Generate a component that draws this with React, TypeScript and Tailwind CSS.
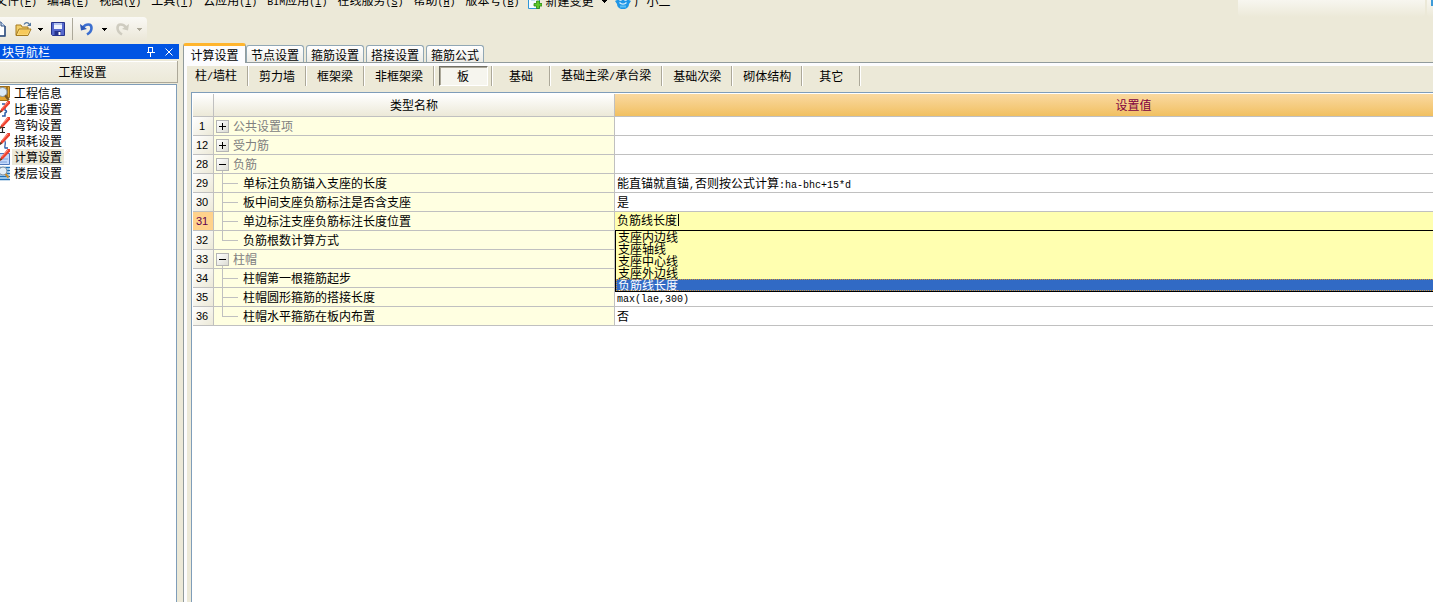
import React from 'react';

type Row = {
  no: number;
  name: string;
  value?: string;
  group?: 'open' | 'closed';
  last?: boolean;
  editing?: boolean;
};

const menus = [
  ['文件', 'F'],
  ['编辑', 'E'],
  ['视图', 'V'],
  ['工具', 'T'],
  ['云应用', 'I'],
  ['BIM应用', 'I'],
  ['在线服务', 'S'],
  ['帮助', 'H'],
  ['版本号', 'B'],
];

const tabs = ['计算设置', '节点设置', '箍筋设置', '搭接设置', '箍筋公式'];

const categories = [
  '柱/墙柱',
  '剪力墙',
  '框架梁',
  '非框架梁',
  '板',
  '基础',
  '基础主梁/承台梁',
  '基础次梁',
  '砌体结构',
  '其它',
];

const rows: Row[] = [
  { no: 1, name: '公共设置项', group: 'closed' },
  { no: 12, name: '受力筋', group: 'closed' },
  { no: 28, name: '负筋', group: 'open' },
  { no: 29, name: '单标注负筋锚入支座的长度', value: '能直锚就直锚,否则按公式计算:ha-bhc+15*d' },
  { no: 30, name: '板中间支座负筋标注是否含支座', value: '是' },
  { no: 31, name: '单边标注支座负筋标注长度位置', value: '负筋线长度', editing: true },
  { no: 32, name: '负筋根数计算方式', last: true },
  { no: 33, name: '柱帽', group: 'open' },
  { no: 34, name: '柱帽第一根箍筋起步' },
  { no: 35, name: '柱帽圆形箍筋的搭接长度', value: 'max(lae,300)' },
  { no: 36, name: '柱帽水平箍筋在板内布置', value: '否', last: true },
];

const options = ['支座内边线', '支座轴线', '支座中心线', '支座外边线', '负筋线长度'];

// Latin characters take half the width of a Chinese one
const Mixed = ({ text }: { text: string }) => (
  <>
    {text.split(/([\x20-\x7e]+)/).map((part, i) =>
      i % 2 ? (
        <span key={i} className="font-['Liberation_Mono',monospace] text-[10px]">
          {part}
        </span>
      ) : (
        part
      ),
    )}
  </>
);

const Caret = ({ className = '' }: { className?: string }) => (
  <svg viewBox="0 0 5 3" className={`h-[3px] w-[5px] shrink-0 ${className}`} fill="currentColor" shapeRendering="crispEdges">
    <path d="M0 0h5v1H4v1H3v1H2V2H1V1H0z" />
  </svg>
);

const NewDocIcon = () => (
  <svg viewBox="0 0 16 16" className="h-4 w-4">
    <path d="M3 1h7l4 4v10H3z" fill="#fff" stroke="#4a6ea8" />
    <path d="M10 1v4h4" fill="#c9daf3" stroke="#34527f" />
    <path d="M14 5v10H4" fill="none" stroke="#34527f" strokeWidth="1.5" />
  </svg>
);

const OpenIcon = () => (
  <svg viewBox="0 0 17 16" className="h-4 w-[17px]">
    <path d="M1 14V4h5l1 2h6v3" fill="#f2cf6b" stroke="#a67a1e" />
    <path d="M4 8h12l-3 6.5H1z" fill="#fbdf86" stroke="#a67a1e" />
    <path d="M5 9h9.5L12 13.5H3z" fill="#f7c95a" />
    <path d="M9 3.5C10.5 1 13 1 14.5 3.5" fill="none" stroke="#53779f" strokeWidth="1.3" />
    <path d="M16 1.5V5h-4z" fill="#53779f" />
  </svg>
);

const SaveIcon = () => (
  <svg viewBox="0 0 14 14" className="h-3.5 w-3.5">
    <path d="M.5.5h13v13h-12l-1-1z" fill="#5568cc" stroke="#26338c" />
    <path d="M3 1h8v6H3z" fill="#eef2fd" />
    <path d="M3 1h8v2H3z" fill="#b3c4f0" />
    <path d="M3.5 9H10v4H3.5z" fill="#26338c" />
    <path d="M7.5 10h2v3h-2z" fill="#fff" />
  </svg>
);

const TurnIcon = ({ redo = false }: { redo?: boolean }) => (
  <svg viewBox="0 0 14 14" className="h-3.5 w-3.5">
    <g transform={redo ? 'translate(14 0) scale(-1 1)' : undefined}>
      <path
        d="M3 5.5C6 1.5 11.5 1.5 11.5 6c0 3-2 5-4.5 6.5"
        fill="none"
        stroke={redo ? '#cfccc0' : '#3c6fd0'}
        strokeWidth="2.6"
      />
      <path d="M0 2l1 6.5L7 7z" fill={redo ? '#cfccc0' : '#2c57b8'} />
    </g>
  </svg>
);

const ChangeIcon = () => (
  <svg viewBox="0 0 14 16" className="h-4 w-3.5">
    <path d="M.5.5h11v15H.5z" fill="#f4faff" stroke="#2f97d8" />
    <path d="M3 4h6M3 7h4" stroke="#9cc8ea" />
    <path d="M8.5 8h3v2.500H14v2.500h-2.500v2.500h-3V13H6v-2.500h2.500z" fill="#5cc82a" stroke="#2c8a10" strokeWidth=".8" />
  </svg>
);

const MascotIcon = () => (
  <svg viewBox="0 0 16 16" className="h-4 w-4">
    <path d="M2 3h12v4l2 1-2 3c0 2-1 3-2 4l-2 1H6l-2-1c-1-1-2-2-2-4L0 8l2-1z" fill="#1f96e6" />
    <circle cx="5.5" cy="6" r="1.8" fill="#fff" />
    <circle cx="10.5" cy="6" r="1.8" fill="#fff" />
    <path d="M4.500 9.500c2 2 5 2 7 0" fill="none" stroke="#d8f0ff" strokeWidth="1.300" />
    <path d="M5 13.500h6" stroke="#5cc0f5" strokeWidth="2" />
  </svg>
);

const Pencil = () => (
  <>
    <path d="M14.5 0h2.5v2.5L10 10l-3 2 1-4z" fill="#ee3f2c" />
    <path d="M15 1L8.5 8" stroke="#ff9684" />
    <path d="M6.5 12l1-3 2 1.600z" fill="#5b4028" />
  </>
);

const navItems = [
  {
    label: '工程信息',
    icon: (
      <>
        <path d="M2 1.5h14.500v11H13l2 3H5z" fill="#e2a531" stroke="#9b6e1c" />
        <path d="M14 2v10" stroke="#5d4310" />
        <circle cx="9.5" cy="7" r="4.5" fill="#dcecf8" stroke="#8192a5" />
        <path d="M12 10.500l4 4.500" stroke="#7b5a22" strokeWidth="2" />
      </>
    ),
  },
  {
    label: '比重设置',
    icon: (
      <>
        <path d="M9 3h3M12 6v3c2 1 2 2 0 3v3H9" fill="none" stroke="#2c5da8" strokeWidth="1.500" />
        <Pencil />
      </>
    ),
  },
  {
    label: '弯钩设置',
    icon: (
      <>
        <path d="M5 10.5h7M9.5 10v6M7 15.5h5" fill="none" stroke="#222" strokeWidth="1.200" />
        <Pencil />
      </>
    ),
  },
  {
    label: '损耗设置',
    icon: (
      <>
        <path d="M5 12c4 0 3-6 6-5s0 7 1 8h3" fill="none" stroke="#2c5da8" strokeWidth="1.300" />
        <Pencil />
      </>
    ),
  },
  {
    label: '计算设置',
    icon: (
      <>
        <path d="M2 4.5h14.500v11H2z" fill="#c3d8fa" stroke="#4f78bd" />
        <path d="M4 13h10M10 10h5" stroke="#7fa2dc" />
        <Pencil />
      </>
    ),
  },
  {
    label: '楼层设置',
    icon: (
      <>
        <path d="M5 2h11v13H5z" fill="#bfe0f8" />
        <path d="M4 2.5h13M4 5.5h13M4 8.5h13M4 11.5h13M4 14.5h13" stroke="#1f70b8" strokeWidth="1.500" />
        <circle cx="10" cy="6" r="4" fill="#e3eef7" stroke="#8796a6" />
        <path d="M12.500 9l3 3.500" stroke="#c98d2c" strokeWidth="2" />
      </>
    ),
  },
];

const MenuBar = () => (
  <header className="-mt-[11px] flex h-6 shrink-0 items-center">
    <nav className="-ml-[5px] flex items-center gap-[10px]">
      {menus.map(([label, key]) => (
        <button key={label} className="whitespace-nowrap">
          <Mixed text={`${label}(`} />
          <span className="font-['Liberation_Mono',monospace] text-[10px] underline">{key}</span>
          <Mixed text=")" />
        </button>
      ))}
      <button className="-ml-0.5 flex items-center gap-1">
        <ChangeIcon />
        新建变更
        <Caret className="ml-1" />
      </button>
      <button className="-ml-0.5 flex items-center gap-1">
        <MascotIcon />
        广小二
      </button>
    </nav>
    <div className="mt-1 ml-auto h-7 w-[187px] rounded-b bg-linear-to-b from-white to-[#ece9d8]" />
    <div className="mt-1 ml-0.5 h-7 w-1.5 rounded-bl bg-linear-to-b from-white to-[#ece9d8]">
      <div className="ml-auto h-[17px] w-0.5 bg-[#3d9bd8]" />
    </div>
  </header>
);

const Toolbar = () => (
  <div className="mt-1 mb-0.5 flex h-6 w-[147px] shrink-0 items-center rounded-r bg-linear-to-b from-[#faf9f5] to-[#ebe7d8]">
    <button aria-label="新建" className="-ml-[9px]">
      <NewDocIcon />
    </button>
    <button aria-label="打开" className="ml-2 flex items-center gap-[6px]">
      <OpenIcon />
      <Caret />
    </button>
    <button aria-label="保存" className="ml-2">
      <SaveIcon />
    </button>
    <span className="ml-[7px] h-[22px] w-px bg-[#aca899]" />
    <button aria-label="撤销" className="ml-[7px] flex items-center gap-2">
      <TurnIcon />
      <Caret />
    </button>
    <button aria-label="重做" disabled className="ml-2 flex items-center gap-2 text-[#aca899]">
      <TurnIcon redo />
      <Caret />
    </button>
  </div>
);

const Navigator = () => (
  <aside className="mt-px flex w-[179px] shrink-0 flex-col">
    <div className="flex h-[15px] items-center bg-[#0054e3] text-white">
      <span className="pl-0.5">块导航栏</span>
      <button aria-label="固定" className="ml-auto">
        <svg viewBox="0 0 8 10" className="h-[10px] w-2" fill="none" stroke="currentColor" shapeRendering="crispEdges">
          <path d="M1.500.5h4v5h-4zM5 1v5M0 5.500h8M3.500 6v4" />
        </svg>
      </button>
      <button aria-label="关闭" className="mr-1.5 ml-2.5">
        <svg viewBox="0 0 8 8" className="h-2 w-2" fill="none" stroke="currentColor">
          <path d="M.5.5l7 7M7.500.5l-7 7" />
        </svg>
      </button>
    </div>
    <button className="mt-0.5 mr-px h-[22px] border-r border-b border-[#aca899] bg-linear-to-b from-[#f3f1e8] to-[#ece9d8] pr-3 shadow-[inset_0_1px_#fff]">
      工程设置
    </button>
    <ul className="mt-px mr-0.5 flex-1 border-t border-r border-[#7f9db9] bg-white">
      {navItems.map((item) => (
        <li key={item.label} className="flex h-4 items-center">
          <svg viewBox="0 0 17 16" className="-ml-[7px] h-4 w-[17px]">
            {item.icon}
          </svg>
          <button className={`ml-0.5 h-4 px-0.5 ${item.label === '计算设置' ? 'bg-[#ece9d8]' : ''}`}>
            {item.label}
          </button>
        </li>
      ))}
    </ul>
  </aside>
);

const TreeCell = ({ row }: { row: Row }) => (
  <div className="flex h-[18px] items-center">
    {row.group ? (
      <>
        <div className="ml-0.5 flex h-[18px] w-[13px] flex-col items-center pt-[3px]">
          <button
            aria-label={row.group === 'open' ? '折叠' : '展开'}
            className="h-[13px] w-[13px] border border-[#b5b5b5] bg-linear-to-br from-white to-[#dcdcd4]"
          >
            <svg viewBox="0 0 11 11" className="block h-[11px] w-[11px]" stroke="#000" shapeRendering="crispEdges">
              <path d={row.group === 'open' ? 'M2 5.500h7' : 'M2 5.500h7M5.500 2v7'} />
            </svg>
          </button>
          {row.group === 'open' && <span className="h-[3px] w-px bg-[#c0c0c0]" />}
        </div>
        <span className="pl-1 text-[#808080]">{row.name}</span>
      </>
    ) : (
      <>
        <div className="-mb-px ml-2 flex h-[19px] w-4 flex-col">
          <span className="h-[10px] border-b border-l border-[#c0c0c0]" />
          {!row.last && <span className="flex-1 border-l border-[#c0c0c0]" />}
        </div>
        <span className="pl-[5px]">{row.name}</span>
      </>
    )}
  </div>
);

const ValueCell = ({ row }: { row: Row }) => {
  if (!row.editing) {
    return (
      <div className="h-[18px] pl-0.5 leading-[18px]">
        <Mixed text={row.value ?? ''} />
      </div>
    );
  }
  return (
    <div className="relative flex h-[18px] items-start bg-[#ffffb0]">
      <input
        aria-label={row.name}
        defaultValue={row.value}
        className="h-4 w-[63px] bg-transparent pl-0.5 outline-none"
      />
      <span className="mt-0.5 h-3 w-px bg-black" />
      <ul role="listbox" aria-label={row.name} className="absolute top-[18px] left-0 z-10 w-full border border-black bg-[#ffffb0]">
        {options.map((option) => (
          <li
            key={option}
            role="option"
            aria-selected={option === row.value}
            className={`h-3 pl-0.5 leading-3 ${
              option === row.value ? 'bg-[#316ac5] text-white outline-1 -outline-offset-1 outline-dotted outline-[#ce953a]' : ''
            }`}
          >
            {option}
          </li>
        ))}
      </ul>
    </div>
  );
};

const SettingsTable = () => (
  <table className="w-[1459px] table-fixed border-separate border-spacing-0">
    <colgroup>
      <col className="w-[21px]" />
      <col className="w-[401px]" />
      <col />
    </colgroup>
    <thead>
      <tr className="h-[23px]">
        <th className="border-r border-b border-[#c0c0c0] bg-linear-to-b from-white to-[#ece9d8]" />
        <th className="border-r border-b border-[#c0c0c0] bg-linear-to-b from-white to-[#ece9d8] font-normal">类型名称</th>
        <th className="border-b border-[#c0c0c0] bg-linear-to-b from-[#fad9a0] to-[#f1c060] font-normal text-[#800040]">
          设置值
        </th>
      </tr>
    </thead>
    <tbody>
      {rows.map((row) => (
        <tr key={row.no} className="h-[19px]">
          <th
            className={`border-r border-b border-[#c0c0c0] p-0 pr-0.5 font-['Liberation_Sans',sans-serif] text-[11px] leading-[18px] font-normal ${
              row.editing ? 'bg-[#ffd28c] text-[#600050]' : 'bg-linear-to-br from-white to-[#ece9d8]'
            }`}
          >
            {row.no}
          </th>
          <td className="border-r border-b border-[#c0c0c0] bg-[#ffffe1] p-0">
            <TreeCell row={row} />
          </td>
          <td className="border-b border-[#c0c0c0] p-0">
            <ValueCell row={row} />
          </td>
        </tr>
      ))}
    </tbody>
  </table>
);

const Workspace = () => (
  <main className="ml-1 flex min-w-0 flex-1 flex-col">
    <div role="tablist" className="flex h-[19px] shrink-0 items-end gap-0.5">
      {tabs.map((tab, i) => (
        <button
          key={tab}
          role="tab"
          aria-selected={i === 0}
          className={
            i === 0
              ? 'z-10 -mr-0.5 -mb-px h-5 w-[63px] rounded-t-[3px] border-x border-t-[3px] border-x-[#919b9c] border-t-[#ffb52e] bg-[#fcfcfe] leading-4'
              : 'h-[17px] w-[58px] rounded-t-[3px] border-x border-t border-[#91a7b4] bg-linear-to-b from-white to-[#ecebe5] leading-[17px]'
          }
        >
          {tab}
        </button>
      ))}
    </div>
    <div className="flex min-h-0 flex-1 flex-col border-t border-l border-[#919b9c] bg-[#fcfcfe] pt-[3px] pl-[3px]">
      <div className="flex min-h-0 flex-1 flex-col bg-[#ece9d8]">
        <div className="flex h-[26px] shrink-0 items-start">
          {categories.map((category, i) => (
            <div key={category} className="flex h-5 border-r border-white">
              <div className={`flex min-w-[57px] items-center justify-center border-r border-[#aca899] ${i === 0 ? 'pr-2.5 pl-2' : 'px-2.5'}`}>
                {category === '板' ? (
                  <button className="-mx-2 h-5 w-[49px] shrink-0 border border-t-[#716f64] border-r-white border-b-white border-l-[#716f64] bg-[#f6f5ee] shadow-[inset_1px_1px_#aca899]">
                    {category}
                  </button>
                ) : (
                  <button className="whitespace-nowrap">
                    <Mixed text={category} />
                  </button>
                )}
              </div>
            </div>
          ))}
        </div>
        <div className="ml-1 min-h-0 flex-1 overflow-hidden border-t border-l border-[#7f9db9] bg-white pt-px pl-px">
          <SettingsTable />
        </div>
      </div>
    </div>
  </main>
);

const App: React.FC = () => {
  return (
    <div className="flex h-screen flex-col overflow-hidden bg-[#ece9d8] font-['Noto_Sans_CJK_SC',sans-serif] text-[12px] leading-4 text-black">
      <MenuBar />
      <Toolbar />
      <div className="flex min-h-0 flex-1">
        <Navigator />
        <Workspace />
      </div>
    </div>
  );
};

export default App;
